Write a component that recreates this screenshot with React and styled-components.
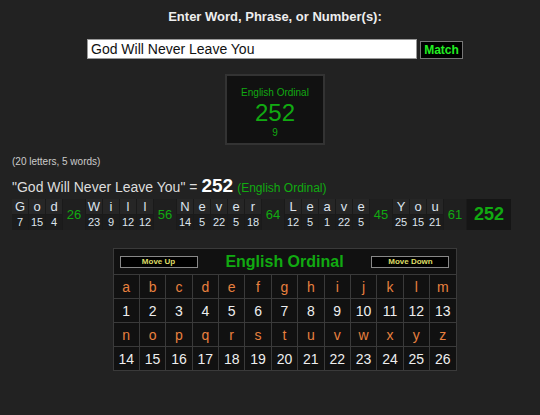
import React from 'react';
import styled, { createGlobalStyle } from 'styled-components';

const colors = {
  page: '#222222',
  panel: '#111111',
  green: '#11aa11',
  brightGreen: '#22ee22',
  orange: '#e8803f',
  text: '#eeeeee',
};

const GlobalStyle = createGlobalStyle`
  html, body {
    margin: 0;
    padding: 0;
    background: ${colors.page};
    font-family: "Liberation Sans", Arial, sans-serif;
  }
`;

const Page = styled.div`
  width: 540px;
  height: 415px;
  overflow: hidden;
  display: flex;
  flex-direction: column;
  padding-top: 9px;
  box-sizing: border-box;
`;

const Heading = styled.div`
  text-align: center;
  color: ${colors.text};
  font-weight: bold;
  font-size: 13px;
  padding-left: 10px;
`;

const SearchRow = styled.div`
  display: flex;
  align-items: center;
  margin-top: 15px;
  padding-left: 87px;
  gap: 3px;
`;

const Input = styled.input`
  width: 330px;
  height: 20px;
  box-sizing: border-box;
  border: 1px solid #999;
  padding: 0 3px;
  font-family: "Liberation Sans", Arial, sans-serif;
  font-size: 14px;
  color: #111;
  background: #fff;
  outline: none;
`;

const MatchButton = styled.button`
  height: 18px;
  width: 43px;
  margin-top: 2px;
  padding: 0;
  background: #000;
  border: 1px solid #777;
  color: ${colors.brightGreen};
  font-family: "Liberation Sans", Arial, sans-serif;
  font-weight: bold;
  font-size: 12px;
`;

const ResultBox = styled.div`
  align-self: center;
  margin-top: 15px;
  margin-left: 10px;
  width: 100px;
  height: 71px;
  box-sizing: border-box;
  background: ${colors.panel};
  border: 2px solid #333;
  display: flex;
  flex-direction: column;
  align-items: center;
  padding-top: 11px;
  color: ${colors.green};
`;

const BoxLabel = styled.div`
  font-size: 10px;
`;

const BoxValue = styled.div`
  font-size: 24px;
  line-height: 30px;
`;

const BoxSub = styled.div`
  font-size: 10px;
  line-height: 10px;
`;

const Counts = styled.div`
  margin: 11px 0 0 12px;
  color: #cccccc;
  font-size: 10px;
`;

const Equation = styled.div`
  margin: 8px 0 0 12px;
  color: #dddddd;
  font-size: 14px;
  display: flex;
  align-items: baseline;
`;

const BigNum = styled.span`
  font-weight: bold;
  font-size: 19px;
  color: #fff;
  margin: 0 4px 0 4px;
`;

const CipherName = styled.span`
  color: ${colors.green};
  font-size: 12px;
`;

const Breakdown = styled.div`
  margin: 2px 0 0 12px;
  display: flex;
  gap: 1px;
  background: #1a1a1a;
  align-self: flex-start;
`;

const LetterCol = styled.div`
  width: 16px;
  display: flex;
  flex-direction: column;
  gap: 1px;
`;

const LetterCell = styled.div`
  height: 15px;
  background: ${(p) => (p.$top ? '#262626' : '#1c1c1c')};
  color: #dde4ee;
  font-size: ${(p) => (p.$top ? '13px' : '11px')};
  line-height: 15px;
  text-align: center;
`;

const WordTotal = styled.div`
  width: ${(p) => (p.$final ? '44px' : '22px')};
  display: flex;
  align-items: center;
  justify-content: center;
  color: ${colors.green};
  font-size: ${(p) => (p.$final ? '18px' : '13px')};
  font-weight: ${(p) => (p.$final ? 'bold' : 'normal')};
  background: ${(p) => (p.$final ? '#151515' : '#1f1f1f')};
`;

const ChartTable = styled.table`
  align-self: center;
  margin-top: 18px;
  margin-left: 29px;
  width: 344px;
  border-collapse: collapse;
  background: ${colors.panel};
  border: 1px solid #3a3a3a;
`;

const HeaderCell = styled.td`
  height: 25px;
  padding: 0 6px;
  border-bottom: 1px solid #3a3a3a;
`;

const HeaderInner = styled.div`
  display: flex;
  align-items: center;
  justify-content: space-between;
`;

const MoveButton = styled.div`
  width: 76px;
  height: 10px;
  background: #000;
  border: 1px solid #888;
  color: #dddd66;
  font-size: 8px;
  font-weight: bold;
  line-height: 10px;
  text-align: center;
`;

const ChartTitle = styled.div`
  color: ${colors.green};
  font-weight: bold;
  font-size: 16px;
`;

const Cell = styled.td`
  width: 26px;
  height: 23px;
  padding: 0;
  border: 1px solid #3a3a3a;
  text-align: center;
  font-size: 14px;
  color: ${(p) => (p.$letter ? colors.orange : colors.text)};
`;

const words = ['God', 'Will', 'Never', 'Leave', 'You'];
const val = (c) => c.toLowerCase().charCodeAt(0) - 96;
const alphabet = 'abcdefghijklmnopqrstuvwxyz'.split('');

const App = () => {
  const rows = [alphabet.slice(0, 13), alphabet.slice(13)];
  return (
    <Page>
      <GlobalStyle />
      <Heading>Enter Word, Phrase, or Number(s):</Heading>
      <SearchRow>
        <Input defaultValue="God Will Never Leave You" />
        <MatchButton>Match</MatchButton>
      </SearchRow>
      <ResultBox>
        <BoxLabel>English Ordinal</BoxLabel>
        <BoxValue>252</BoxValue>
        <BoxSub>9</BoxSub>
      </ResultBox>
      <Counts>(20 letters, 5 words)</Counts>
      <Equation>
        "God Will Never Leave You" =<BigNum>252</BigNum>
        <CipherName>(English Ordinal)</CipherName>
      </Equation>
      <Breakdown>
        {words.map((w) => (
          <React.Fragment key={w}>
            {w.split('').map((c, i) => (
              <LetterCol key={i}>
                <LetterCell $top>{c}</LetterCell>
                <LetterCell>{val(c)}</LetterCell>
              </LetterCol>
            ))}
            <WordTotal>{w.split('').reduce((s, c) => s + val(c), 0)}</WordTotal>
          </React.Fragment>
        ))}
        <WordTotal $final>252</WordTotal>
      </Breakdown>
      <ChartTable>
        <tbody>
          <tr>
            <HeaderCell colSpan={13}>
              <HeaderInner>
                <MoveButton>Move Up</MoveButton>
                <ChartTitle>English Ordinal</ChartTitle>
                <MoveButton>Move Down</MoveButton>
              </HeaderInner>
            </HeaderCell>
          </tr>
          {rows.map((r, ri) => (
            <React.Fragment key={ri}>
              <tr>
                {r.map((c) => (
                  <Cell $letter key={c}>{c}</Cell>
                ))}
              </tr>
              <tr>
                {r.map((c) => (
                  <Cell key={c}>{val(c)}</Cell>
                ))}
              </tr>
            </React.Fragment>
          ))}
        </tbody>
      </ChartTable>
    </Page>
  );
};

export default App;
